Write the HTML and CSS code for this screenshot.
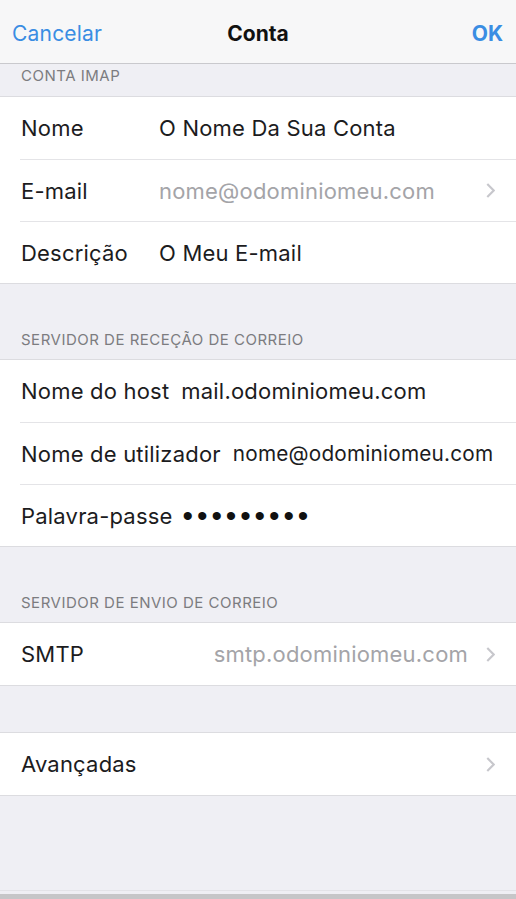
FILE: index.html
```html
<!DOCTYPE html>
<html lang="pt">
<head>
<meta charset="utf-8">
<title>Conta</title>
<link rel="stylesheet" href="styles.css">
</head>
<body>
<div class="screen">
  <header class="nav">
    <span class="nav-btn">Cancelar</span>
    <span class="nav-title">Conta</span>
    <span class="nav-btn nav-done">OK</span>
  </header>

  <div class="section-head first">CONTA IMAP</div>
  <div class="group">
    <div class="row"><span class="label fixed">Nome</span><span class="value">O Nome Da Sua Conta</span></div>
    <div class="row"><span class="label fixed">E-mail</span><span class="value muted">nome@odominiomeu.com</span><svg class="chev" viewBox="0 0 8 14"><path d="M1 1l6 6-6 6"/></svg></div>
    <div class="row"><span class="label fixed">Descrição</span><span class="value">O Meu E-mail</span></div>
  </div>

  <div class="section-head tall">SERVIDOR DE RECEÇÃO DE CORREIO</div>
  <div class="group">
    <div class="row"><span class="label">Nome do host</span><span class="value">mail.odominiomeu.com</span></div>
    <div class="row"><span class="label">Nome de utilizador</span><span class="value shrink">nome@odominiomeu.com</span></div>
    <div class="row"><span class="label">Palavra-passe</span><span class="value dots">•••••••••</span></div>
  </div>

  <div class="section-head tall">SERVIDOR DE ENVIO DE CORREIO</div>
  <div class="group">
    <div class="row"><span class="label">SMTP</span><span class="value muted right">smtp.odominiomeu.com</span><svg class="chev" viewBox="0 0 8 14"><path d="M1 1l6 6-6 6"/></svg></div>
  </div>

  <div class="spacer"></div>
  <div class="group">
    <div class="row"><span class="label">Avançadas</span><span class="fill"></span><svg class="chev" viewBox="0 0 8 14"><path d="M1 1l6 6-6 6"/></svg></div>
  </div>

  <div class="bottom"></div>
  <div class="toolbar"></div>
</div>
</body>
</html>
```

FILE: styles.css
```css
* { box-sizing: border-box; }
html, body {
  margin: 0;
  padding: 0;
  background: #efeff4;
  font-family: Inter, "Liberation Sans", Arial, sans-serif;
  color: #1c1c1e;
}
.screen {
  width: 516px;
  height: 899px;
  display: flex;
  flex-direction: column;
  overflow: hidden;
}
.nav {
  height: 64px;
  flex: none;
  background: #f7f7f8;
  border-bottom: 1px solid #c9c9cd;
  display: flex;
  align-items: center;
  justify-content: space-between;
  padding: 4px 13px 0 12px;
  position: relative;
}
.nav-btn {
  font-size: 21px;
  color: #3a8de3;
  letter-spacing: 0.2px;
}
.nav-done { font-weight: 700; letter-spacing: 0; }
.nav-title {
  position: absolute;
  left: 0;
  right: 0;
  top: 4px;
  bottom: 0;
  display: flex;
  align-items: center;
  justify-content: center;
  font-size: 21px;
  font-weight: 700;
  color: #111;
  pointer-events: none;
}
.section-head {
  flex: none;
  font-size: 15px;
  line-height: 18px;
  letter-spacing: 0.5px;
  color: #7c7c80;
  padding: 0 21px;
  display: flex;
}
.section-head.first {
  height: 32px;
  align-items: center;
  padding-bottom: 8px;
}
.section-head.tall {
  height: 75px;
  align-items: flex-end;
  padding-bottom: 10px;
}
.group {
  flex: none;
  background: #fff;
  border-top: 1px solid #dcdce0;
  border-bottom: 1px solid #dcdce0;
}
.row {
  height: 62px;
  display: flex;
  align-items: center;
  padding: 0 20px 0 21px;
  font-size: 22px;
  letter-spacing: 0.2px;
}
.row + .row {
  border-top: 1px solid #e4e4e7;
  margin-left: 20px;
  padding-left: 1px;
}
.label {
  flex: none;
  margin-right: 12px;
}
.label.fixed { width: 126px; }
.value {
  flex: 1;
  white-space: nowrap;
}
.value.shrink { font-size: 20.75px; }
.value.muted { color: #a4a4a8; }
.value.right { text-align: right; padding-right: 18px; }
.fill { flex: 1; }
.dots {
  font-family: "Liberation Sans", Arial, sans-serif;
  font-size: 30px;
  letter-spacing: 3.9px;
  line-height: 1;
  color: #111;
  margin-left: -2px;
}
.chev {
  flex: none;
  width: 9px;
  height: 15px;
  margin-right: 1px;
  fill: none;
  stroke: #c7c7cc;
  stroke-width: 2;
}
.spacer { flex: none; height: 46px; }
.bottom {
  flex: 1;
  border-bottom: 1px solid #e3e3e8;
}
.toolbar {
  flex: none;
  height: 5px;
  margin-top: 3px;
  background: #c6c6c8;
}
```
